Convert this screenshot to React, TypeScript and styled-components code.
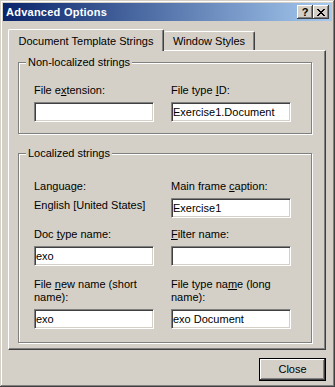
import React from "react";
import styled, { createGlobalStyle } from "styled-components";

const face = "#d4d0c8";
const shadow = "#808080";
const dark = "#404040";
const fontStack = `"Liberation Sans", Arial, sans-serif`;

const GlobalStyle = createGlobalStyle`
  html, body { margin: 0; padding: 0; background: ${face}; }
  body { font-family: ${fontStack}; font-size: 11px; color: #000; }
  * { box-sizing: border-box; }
`;

const Window = styled.div`
  width: 335px;
  height: 387px;
  background: ${face};
  padding: 3px;
  display: flex;
  flex-direction: column;
  box-shadow: inset -1px -1px 0 ${dark}, inset 1px 1px 0 ${face},
    inset -2px -2px 0 ${shadow}, inset 2px 2px 0 #fff;
`;

const TitleBar = styled.div`
  flex: none;
  height: 18px;
  margin-bottom: 1px;
  display: flex;
  align-items: center;
  padding: 0 3px 0 3px;
  background: linear-gradient(to right, #0a246a, #a6caf0);
`;

const Title = styled.span`
  flex: 1;
  color: #fff;
  font-weight: bold;
  font-size: 11px;
  line-height: 13px;
  letter-spacing: 0.25px;
  white-space: nowrap;
`;

const CaptionButtons = styled.div`
  display: flex;
`;

const CaptionButton = styled.div`
  width: 16px;
  height: 14px;
  background: ${face};
  display: flex;
  align-items: center;
  justify-content: center;
  font-weight: bold;
  font-size: 11px;
  line-height: 12px;
  color: #000;
  box-shadow: inset -1px -1px 0 ${dark}, inset 1px 1px 0 #fff,
    inset -2px -2px 0 ${shadow};
`;

const Body = styled.div`
  flex: 1;
  display: flex;
  flex-direction: column;
  padding: 7px 6px 3px 5px;
`;

const TabStrip = styled.div`
  display: flex;
  align-items: flex-end;
  height: 21px;
`;

const Tab = styled.div<{ $active?: boolean; $width: number; $noLeft?: boolean }>`
  position: relative;
  z-index: ${(p) => (p.$active ? 1 : 0)};
  width: ${(p) => p.$width}px;
  height: ${(p) => (p.$active ? 22 : 19)}px;
  margin-bottom: ${(p) => (p.$active ? -1 : 0)}px;
  background: ${face};
  border-top: 1px solid #fff;
  border-left: ${(p) => (p.$noLeft ? "none" : "1px solid #fff")};
  border-right: 1px solid ${dark};
  border-radius: 2px 2px 0 0;
  box-shadow: inset -1px 0 0 ${shadow};
  display: flex;
  justify-content: center;
  padding-top: ${(p) => (p.$active ? 5 : 3)}px;
  line-height: 13px;
  white-space: nowrap;
`;

const Panel = styled.div`
  height: 300px;
  border-top: 1px solid #fff;
  border-left: 1px solid #fff;
  border-right: 1px solid ${dark};
  border-bottom: 1px solid ${dark};
  box-shadow: inset -1px -1px 0 ${shadow};
  padding: 11px 13px 6px 9px;
`;

const GroupBox = styled.div<{ $mt?: number; $pt: number; $pb: number }>`
  position: relative;
  margin-top: ${(p) => p.$mt ?? 0}px;
  border: 1px solid ${shadow};
  box-shadow: inset 1px 1px 0 #fff, 1px 1px 0 #fff;
  padding: ${(p) => p.$pt}px 0 ${(p) => p.$pb}px 15px;
`;

const GroupCaption = styled.span`
  position: absolute;
  top: -7px;
  left: 7px;
  padding: 0 2px;
  background: ${face};
  line-height: 13px;
  white-space: nowrap;
`;

const Row = styled.div<{ $mt?: number }>`
  display: grid;
  grid-template-columns: 120px 120px;
  column-gap: 17px;
  align-items: start;
  margin-top: ${(p) => p.$mt ?? 0}px;
`;

const Field = styled.div`
  display: flex;
  flex-direction: column;
`;

const Label = styled.label`
  line-height: 13px;
  margin-bottom: 5px;
  white-space: nowrap;
`;

const StaticValue = styled.div`
  line-height: 13px;
  padding-top: 1px;
  white-space: nowrap;
`;

const TextBox = styled.input`
  width: 120px;
  height: 20px;
  margin: 0;
  padding: 0 1px;
  border: 1px solid;
  border-color: ${shadow} #fff #fff ${shadow};
  box-shadow: inset 1px 1px 0 ${dark}, inset -1px -1px 0 ${face};
  background: #fff;
  font: 11px ${fontStack};
  color: #000;
  outline: none;
`;

const Footer = styled.div`
  display: flex;
  justify-content: flex-end;
  padding-top: 8px;
`;

const PushButton = styled.button`
  width: 67px;
  height: 23px;
  margin: 0;
  padding: 0 0 1px;
  border: 1px solid #000;
  background: ${face};
  box-shadow: inset -1px -1px 0 ${dark}, inset 1px 1px 0 #fff,
    inset -2px -2px 0 ${shadow};
  font: 11px ${fontStack};
  line-height: 13px;
  color: #000;
`;

const CloseGlyph = () => {
  const rows = [
    "11000011",
    "01100110",
    "00111100",
    "00011000",
    "00111100",
    "01100110",
    "11000011",
  ];
  return (
    <svg width="8" height="7" viewBox="0 0 8 7" shapeRendering="crispEdges">
      {rows.flatMap((r, y) =>
        r.split("").map((c, x) =>
          c === "1" ? <rect key={`${x}-${y}`} x={x} y={y} width="1" height="1" fill="#000" /> : null
        )
      )}
    </svg>
  );
};

export default function App() {
  return (
    <>
      <GlobalStyle />
      <Window>
        <TitleBar>
          <Title>Advanced Options</Title>
          <CaptionButtons>
            <CaptionButton>?</CaptionButton>
            <CaptionButton>
              <CloseGlyph />
            </CaptionButton>
          </CaptionButtons>
        </TitleBar>
        <Body>
          <TabStrip>
            <Tab $active $width={156}>Document Template Strings</Tab>
            <Tab $width={91} $noLeft>Window Styles</Tab>
          </TabStrip>
          <Panel>
            <GroupBox $pt={21} $pb={11}>
              <GroupCaption>Non-localized strings</GroupCaption>
              <Row>
                <Field>
                  <Label>
                    File e<u>x</u>tension:
                  </Label>
                  <TextBox readOnly defaultValue="" />
                </Field>
                <Field>
                  <Label>
                    File type <u>I</u>D:
                  </Label>
                  <TextBox readOnly defaultValue="Exercise1.Document" />
                </Field>
              </Row>
            </GroupBox>
            <GroupBox $mt={19} $pt={26} $pb={13}>
              <GroupCaption>Localized strings</GroupCaption>
              <Row>
                <Field>
                  <Label>Language:</Label>
                  <StaticValue>English [United States]</StaticValue>
                </Field>
                <Field>
                  <Label>
                    Main frame <u>c</u>aption:
                  </Label>
                  <TextBox readOnly defaultValue="Exercise1" />
                </Field>
              </Row>
              <Row $mt={10}>
                <Field>
                  <Label>
                    Doc <u>t</u>ype name:
                  </Label>
                  <TextBox readOnly defaultValue="exo" />
                </Field>
                <Field>
                  <Label>
                    <u>F</u>ilter name:
                  </Label>
                  <TextBox readOnly defaultValue="" />
                </Field>
              </Row>
              <Row $mt={12}>
                <Field>
                  <Label>
                    File <u>n</u>ew name (short
                    <br />
                    name):
                  </Label>
                  <TextBox readOnly defaultValue="exo" />
                </Field>
                <Field>
                  <Label>
                    File type na<u>m</u>e (long
                    <br />
                    name):
                  </Label>
                  <TextBox readOnly defaultValue="exo Document" />
                </Field>
              </Row>
            </GroupBox>
          </Panel>
          <Footer>
            <PushButton>Close</PushButton>
          </Footer>
        </Body>
      </Window>
    </>
  );
}
